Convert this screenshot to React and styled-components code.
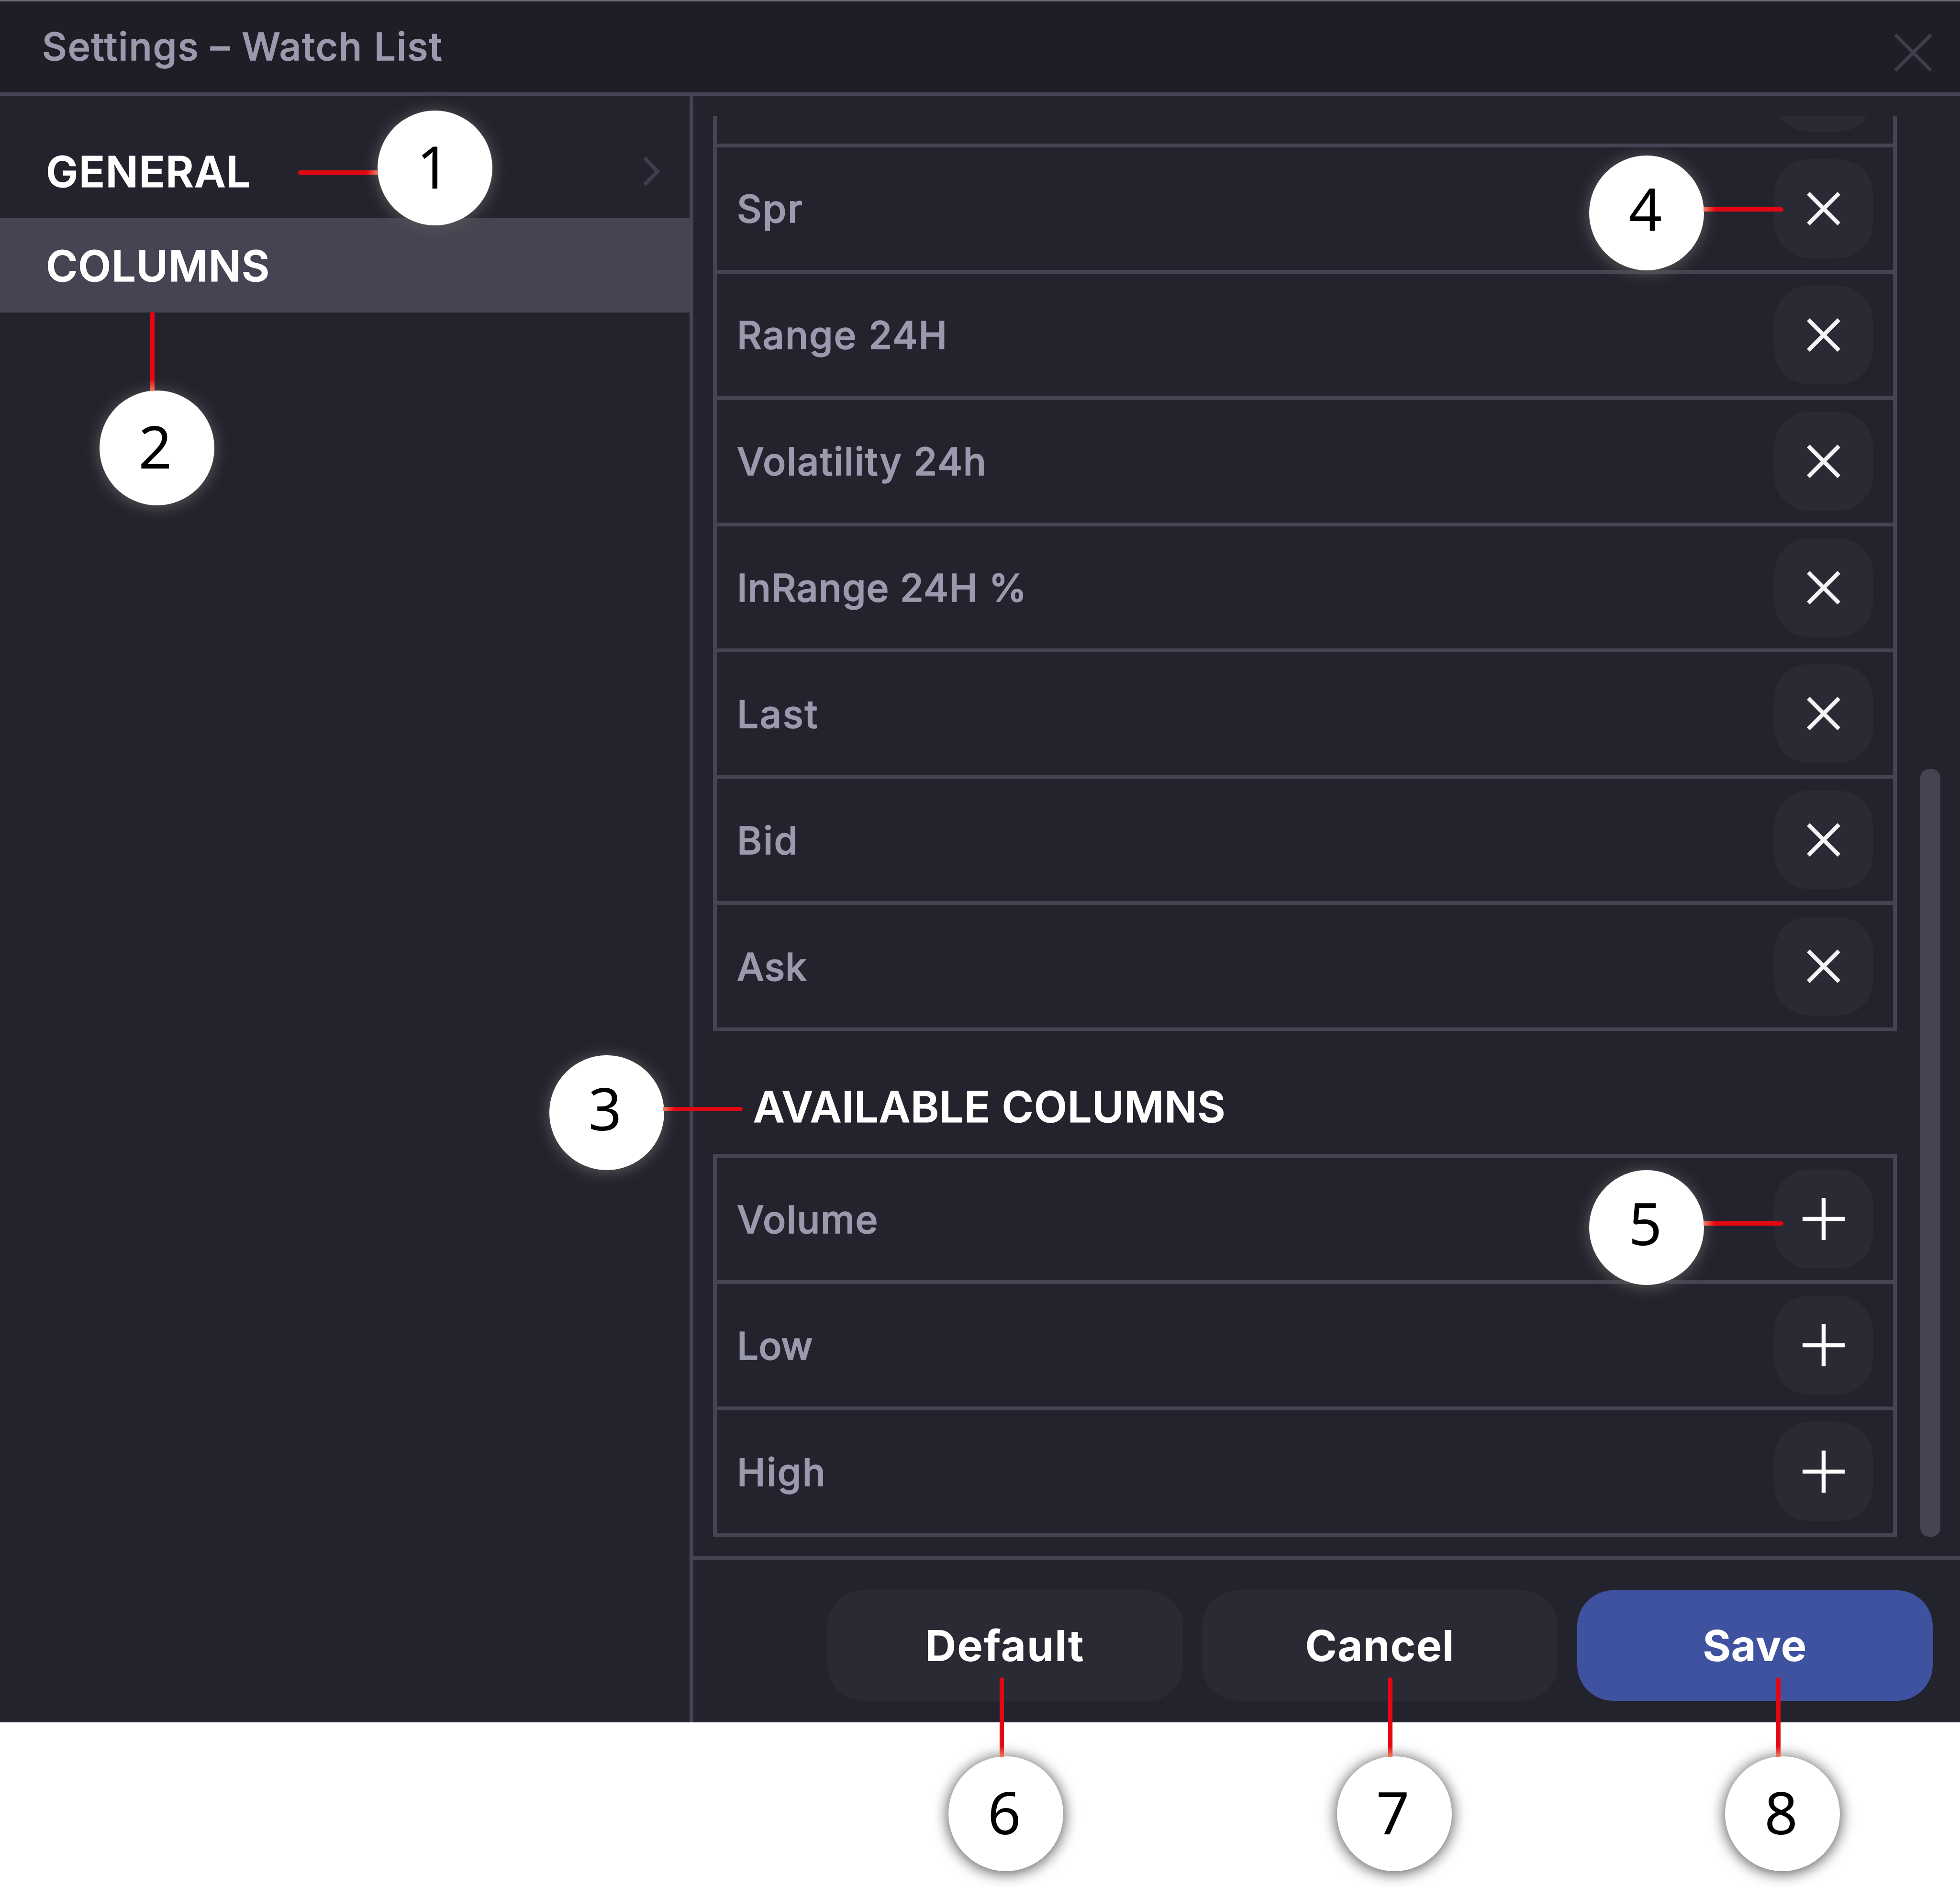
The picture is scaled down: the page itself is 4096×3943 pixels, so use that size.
import React from "react";
import styled, { createGlobalStyle } from "styled-components";

const c = {
  panel: "#23232e",
  header: "#1e1e27",
  line: "#454453",
  button: "#2a2a34",
  text: "#9b99ae",
  red: "#e50613",
};

const Global = createGlobalStyle`
  * { box-sizing: border-box; }
  html, body { margin: 0; background: #fff; }
  body {
    width: 4096px;
    height: 3943px;
    overflow: hidden;
    font-family: Inter, "Liberation Sans", sans-serif;
  }
  button { border: 0; padding: 0; font-family: inherit; color: inherit; }
`;

const Page = styled.main`
  position: relative;
  width: 4096px;
  height: 3943px;
  overflow: hidden;
`;

const Dialog = styled.section`
  display: flex;
  flex-direction: column;
  width: 4096px;
  height: 3599px;
  background: ${c.panel};
`;

const Header = styled.header`
  display: flex;
  align-items: flex-start;
  justify-content: space-between;
  height: 201px;
  padding: 0 58px 0 88px;
  background: ${c.header};
  border-top: 3px solid #6d6d73;
  border-bottom: 8.5px solid ${c.line};
`;

const Title = styled.h1`
  margin: 44px 0 0;
  font-size: 80px;
  line-height: 100px;
  font-weight: 500;
  -webkit-text-stroke: 1.5px ${c.text};
  letter-spacing: 2.1px;
  color: ${c.text};
  white-space: nowrap;
`;

const Close = styled.button`
  display: flex;
  margin-top: 67px;
  background: none;
  color: #403e4e;
`;

const Body = styled.div`
  display: flex;
  flex: 1;
  min-height: 0;
`;

const Sidebar = styled.nav`
  flex: none;
  width: 1449px;
  padding-top: 58px;
  border-right: 8.5px solid ${c.line};
`;

const NavItem = styled.div`
  display: flex;
  align-items: center;
  justify-content: space-between;
  height: 197px;
  padding: 1px 62px 0 96px;
  font-size: 90px;
  font-weight: 600;
  -webkit-text-stroke: 1px #fff;
  letter-spacing: ${(p) => p.$track}px;
  color: #fff;
  background: ${(p) => (p.$active ? c.line : "transparent")};
  svg { color: #403e4e; }
`;

const Content = styled.div`
  flex: 1;
  min-width: 0;
  display: flex;
  flex-direction: column;
`;

const Scroller = styled.div`
  display: flex;
  justify-content: space-between;
  height: 3009.5px;
  margin-top: 41px;
  padding: 0 41px;
  overflow: hidden;
`;

const Lists = styled.div`
  width: 2474px;
  display: flex;
  flex-direction: column;
`;

const List = styled.ul`
  list-style: none;
  margin: 0;
  padding: 0;
  border: 8px solid ${c.line};
  border-top-width: ${(p) => (p.$cut ? 0 : 8)}px;
  margin-top: ${(p) => (p.$cut ? -198 : 0)}px;
`;

const Row = styled.li`
  display: flex;
  align-items: center;
  justify-content: space-between;
  height: ${(p) => (p.$last ? 256 : 263.9)}px;
  padding: 0 42px 0 42px;
  border-bottom: ${(p) => (p.$last ? 0 : 8)}px solid ${c.line};
  font-size: 80px;
  font-weight: 500;
  -webkit-text-stroke: 1.5px ${c.text};
  letter-spacing: ${(p) => p.$track}px;
  color: ${c.text};
`;

const Action = styled.button`
  display: flex;
  align-items: center;
  justify-content: center;
  width: 206px;
  height: 206px;
  border-radius: 72px;
  background: ${c.button};
  color: #f4f4f4;
`;

const Heading = styled.h2`
  height: 256px;
  margin: 0;
  padding: 108px 0 0 84px;
  font-size: 90px;
  line-height: 100px;
  font-weight: 600;
  -webkit-text-stroke: 1px #fff;
  letter-spacing: 0.8px;
  color: #fff;
  white-space: nowrap;
`;

const ScrollTrack = styled.div`
  display: flex;
  height: 2968.5px;
`;

const Thumb = styled.div`
  align-self: flex-end;
  width: 42px;
  height: 1604px;
  border-radius: 18px;
  background: ${c.line};
`;

const Footer = styled.footer`
  display: flex;
  justify-content: flex-end;
  gap: 40.5px;
  flex: 1;
  padding: 63px 57.5px 0 0;
  border-top: 8px solid ${c.line};
`;

const FooterButton = styled.button`
  width: 743px;
  height: 231px;
  padding-top: 1px;
  border-radius: 75px;
  background: ${(p) => (p.$primary ? "#3f529f" : c.button)};
  color: #fff;
  font-size: 90px;
  font-weight: 700;
  letter-spacing: ${(p) => p.$track}px;
`;

const Badge = styled.div`
  position: absolute;
  left: ${(p) => p.$x - 120}px;
  top: ${(p) => p.$y - 120}px;
  width: 240px;
  height: 240px;
  padding-right: 6px;
  border-radius: 50%;
  background: #fff;
  box-shadow: 0 3px 30px 2px rgb(92, 86, 86);
  color: #000;
  text-align: center;
  font-family: "Noto Sans", sans-serif;
  font-size: 122px;
  line-height: ${(p) => (p.$raised ? 221 : 232)}px;
`;

const Leader = styled.div`
  position: absolute;
  left: ${(p) => p.$x}px;
  top: ${(p) => p.$y}px;
  width: ${(p) => (p.$dir === "v" ? 9 : p.$len)}px;
  height: ${(p) => (p.$dir === "v" ? p.$len : 9)}px;
  border-radius: ${(p) => ({ v: "5px 5px 0 0", left: "0 5px 5px 0", right: "5px 0 0 5px" })[p.$dir]};
  background: linear-gradient(
    ${(p) => ({ v: "to top", left: "to right", right: "to left" })[p.$dir]},
    #f08060 0, ${c.red} 24px
  );
`;

const Cross = ({ size, stroke }) => (
  <svg width={size} height={size} viewBox={`0 0 ${size} ${size}`} fill="none" stroke="currentColor" strokeWidth={stroke}>
    <path d={`M3 3L${size - 3} ${size - 3}M${size - 3} 3L3 ${size - 3}`} />
  </svg>
);

const Plus = () => (
  <svg width="90" height="90" viewBox="0 0 90 90" fill="none" stroke="#fff" strokeWidth="8.5">
    <path d="M45 1V89M1 45H89" />
  </svg>
);

const Chevron = () => (
  <svg width="36" height="62" viewBox="0 0 36 62" fill="none" stroke="currentColor" strokeWidth="8">
    <path d="M4 3L31 31L4 59" />
  </svg>
);

const used = [
  { name: "", track: 0 },
  { name: "Spr", track: 2.4 },
  { name: "Range 24H", track: 2 },
  { name: "Volatility 24h", track: 1.7 },
  { name: "InRange 24H %", track: 1 },
  { name: "Last", track: 2.6 },
  { name: "Bid", track: 2.4 },
  { name: "Ask", track: 0.8 },
];
const available = [
  { name: "Volume", track: 1.5 },
  { name: "Low", track: 0 },
  { name: "High", track: 2.5 },
];

const notes = [
  { n: 1, x: 908.7, y: 351.4, dir: "right", lx: 623, ly: 356, len: 167 },
  { n: 2, x: 327.5, y: 936.2, dir: "v", lx: 314, ly: 651, len: 166 },
  { n: 3, x: 1267.5, y: 2325.2, raised: true, dir: "left", lx: 1386, ly: 2312.5, len: 166 },
  { n: 4, x: 3441.4, y: 445.3, raised: true, dir: "left", lx: 3560, ly: 432.5, len: 167 },
  { n: 5, x: 3441.4, y: 2564.5, raised: true, dir: "left", lx: 3560, ly: 2552, len: 167 },
  { n: 6, x: 2102, y: 3790, dir: "v", lx: 2089, ly: 3505, len: 167 },
  { n: 7, x: 2913.7, y: 3790, dir: "v", lx: 2900.5, ly: 3505, len: 167 },
  { n: 8, x: 3725.1, y: 3790, dir: "v", lx: 3712, ly: 3505, len: 167 },
];

export default function App() {
  return (
    <Page>
      <Global />
      <Dialog>
        <Header>
          <Title>Settings – Watch List</Title>
          <Close aria-label="Close"><Cross size={80} stroke={7} /></Close>
        </Header>
        <Body>
          <Sidebar>
            <NavItem $track={1.3}>GENERAL<Chevron /></NavItem>
            <NavItem $track={0.8} $active>COLUMNS</NavItem>
          </Sidebar>
          <Content>
            <Scroller>
              <Lists>
                <List $cut>
                  {used.map(({ name, track }, i) => (
                    <Row key={i} $track={track} $last={i === used.length - 1}>
                      <span>{name}</span>
                      <Action aria-label="Remove"><Cross size={70} stroke={8.5} /></Action>
                    </Row>
                  ))}
                </List>
                <Heading>AVAILABLE COLUMNS</Heading>
                <List>
                  {available.map(({ name, track }, i) => (
                    <Row key={name} $track={track} $last={i === available.length - 1}>
                      <span>{name}</span>
                      <Action aria-label="Add"><Plus /></Action>
                    </Row>
                  ))}
                </List>
              </Lists>
              <ScrollTrack><Thumb /></ScrollTrack>
            </Scroller>
            <Footer>
              <FooterButton $track={2}>Default</FooterButton>
              <FooterButton $track={1}>Cancel</FooterButton>
              <FooterButton $track={0.5} $primary>Save</FooterButton>
            </Footer>
          </Content>
        </Body>
      </Dialog>
      {notes.map((m) => (
        <React.Fragment key={m.n}>
          <Badge $x={m.x} $y={m.y} $raised={m.raised}>{m.n}</Badge>
          <Leader $dir={m.dir} $x={m.lx} $y={m.ly} $len={m.len} />
        </React.Fragment>
      ))}
    </Page>
  );
}
